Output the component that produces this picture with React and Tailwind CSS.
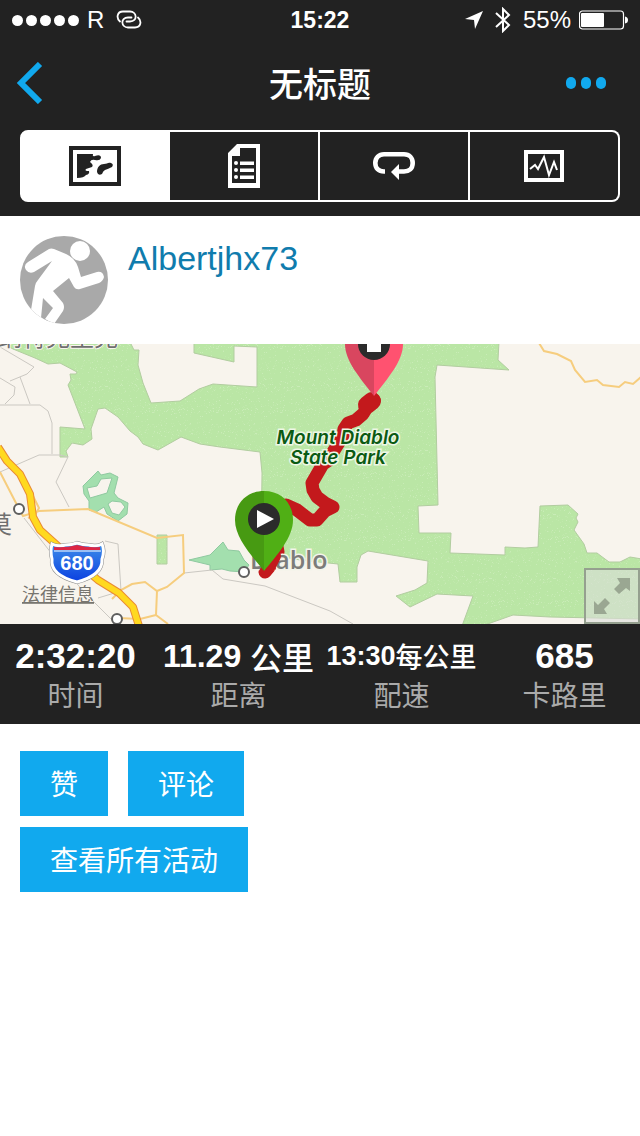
import { useState } from "react";

const latin = "font-['Liberation_Sans','Noto_Sans_CJK_SC',sans-serif]";
const cjk = "font-['Noto_Sans_CJK_SC',sans-serif]";

const stats = [
  { label: "时间", value: "2:32:20", size: "text-[35px]" },
  { label: "距离", value: "11.29 ", unit: "公里", size: "text-[32px]" },
  { label: "配速", value: "13:30", unit: "每公里", size: "text-[27px]" },
  { label: "卡路里", value: "685", size: "text-[35px]" },
];

// light flecks scattered over the park areas
const flecks = Array.from({ length: 400 }, (_, i) => ({
  x: (i * 37 + ((i * i * 7) % 23)) % 64,
  y: (i * 53 + ((i * i * 11) % 31)) % 64,
}));

const MapIcon = () => (
  <svg width="52" height="40" viewBox="0 0 52 40" aria-hidden="true">
    <rect x="2" y="2" width="48" height="36" fill="none" stroke="currentColor" strokeWidth="4" />
    <path fill="currentColor" d="M8 8H24Q23 11 26 10Q32 8 32 12Q31 15 26 14Q22 13 21 16Q25 19 23 21Q20 22 17 23Q15 25 20 25Q21 28 17 29Q15 32 8 32Z" />
    <path fill="currentColor" d="M28 26C28 21 31 18 35 18C38 18 39 16 42 17Q45 18 43 21Q39 23 36 24Q34 25 33 28Q29 30 28 26Z" />
  </svg>
);

const ListIcon = () => (
  <svg width="32" height="44" viewBox="0 0 32 44" fill="currentColor" aria-hidden="true">
    <path fillRule="evenodd" d="M9 0H32V44H0V9ZM12 4V12H4V39H28V4Z" />
    <circle cx="8" cy="19" r="2" />
    <circle cx="8" cy="26" r="2" />
    <circle cx="8" cy="33" r="2" />
    <path d="M12 17.5H26V21H12ZM12 24.5H26V28H12ZM12 31.5H26V35H12Z" />
  </svg>
);

const LapIcon = () => (
  <svg width="42" height="28" viewBox="0 0 42 28" aria-hidden="true">
    <path fill="none" stroke="currentColor" strokeWidth="4.6" d="M12 19.500H11C5.500 19.500 2.300 16 2.300 11C2.300 5.500 6 2.300 11 2.300H31C36.500 2.300 39.700 6 39.700 11C39.700 16.500 36 19.500 31 19.500H25" />
    <path fill="currentColor" d="M26 12V28L18 20Z" />
  </svg>
);

const ChartIcon = () => (
  <svg width="40" height="32" viewBox="0 0 40 32" fill="none" stroke="currentColor" aria-hidden="true">
    <rect x="2" y="2" width="36" height="28" strokeWidth="4" />
    <path strokeWidth="2" d="M6 19L11 15L14 19L20 7L25 25L30 12L33 20" />
  </svg>
);

const tabs = [
  { id: "map", label: "地图", Icon: MapIcon },
  { id: "details", label: "详情", Icon: ListIcon },
  { id: "laps", label: "计圈", Icon: LapIcon },
  { id: "charts", label: "图表", Icon: ChartIcon },
];

const StatusBar = () => (
  <div className="grid h-10 grid-cols-3 items-center px-3 text-2xl text-white">
    <div className="flex items-center">
      <div className="flex gap-[3px]">
        {[0, 1, 2, 3, 4].map((n) => (
          <span key={n} className="size-[11px] rounded-full bg-white" />
        ))}
      </div>
      <span className="ml-2">R</span>
      <svg className="ml-3" width="26" height="20" viewBox="0 0 26 20" fill="none" stroke="#fff" strokeWidth="1.8" strokeLinecap="round" aria-hidden="true">
        <path d="M4 11.500C0 8 1 1.500 7 1.500H14C21 1.500 22 11.500 14 11.500H10.500" />
        <path d="M22 7.500C26 11 25 17.500 19 17.500H12C5 17.500 4 7.500 12 7.500H15.500" />
      </svg>
    </div>
    <span className="text-center text-[23px] font-bold">15:22</span>
    <div className="flex items-center justify-end">
      <svg width="18" height="18" viewBox="0 0 18 18" aria-hidden="true">
        <path fill="#fff" d="M18 0L10 18L9 9L0 8Z" />
      </svg>
      <svg className="ml-3" width="16" height="26" viewBox="0 0 16 26" fill="none" stroke="#fff" strokeWidth="2" aria-hidden="true">
        <path d="M1 6L14 18L8 24V2L14 8L1 20" />
      </svg>
      <span className="ml-3">55%</span>
      <svg className="ml-2" width="49" height="20" viewBox="0 0 49 20" aria-hidden="true">
        <rect x="0.500" y="1" width="44" height="18" rx="3" fill="none" stroke="#fff" strokeWidth="1.200" />
        <rect x="2" y="3" width="23" height="14" rx="1" fill="#fff" />
        <path fill="#fff" d="M46 6.500Q49 7 49 10T46 13.500Z" />
      </svg>
    </div>
  </div>
);

const Avatar = () => (
  <svg className="size-[88px] shrink-0 rounded-full bg-[#a9a9a9]" viewBox="0 0 88 88" aria-hidden="true">
    <circle cx="60" cy="15" r="10" fill="#fff" />
    <path fill="#fff" d="M29 13Q31 12 34 13L46 18Q55 22 58 31L61 41L77 36Q83 35 84 41Q83 45 79 47L60 53Q56 54 54 51L49 42L33 55L43 67Q45 71 43 75L34 88L25 83L33 72L23 62L21 82L11 74L15 50Q16 46 18 44L32 25L14 36Q9 38 6 34Q3 29 8 26Z" />
  </svg>
);

const ActivityMap = () => (
  <div className="relative h-[280px] overflow-hidden bg-[#f8f4ed]">
    <svg className="block h-full w-full" viewBox="0 0 640 280" preserveAspectRatio="xMidYMid slice">
      <defs>
        <pattern id="park" width="64" height="64" patternUnits="userSpaceOnUse">
          <rect width="64" height="64" fill="#bae6a5" />
          {flecks.map((f, i) => (
            <rect key={i} x={f.x} y={f.y} width="1" height="1" fill={i % 3 ? "#c0e8ac" : "#c9ecb7"} />
          ))}
        </pattern>
        <linearGradient id="shield" x1="0" y1="0" x2="0" y2="1">
          <stop offset="0" stopColor="#3f8fea" />
          <stop offset="1" stopColor="#0a3fe0" />
        </linearGradient>
      </defs>

      {/* parks */}
      <g fill="url(#park)" stroke="#b2cda0" strokeWidth="1">
        <path
          fillRule="evenodd"
          d="M0-2L13 5L35 14L48 20L60 19L77 28L76 30L70 30L71 36L68 41L85 85L60 83V113H68L66 107L72 99L83 101L92 95L91 85L98 65L105 64L118 73L130 87L138 93L143 100L158 106L181 93L200 100L220 103L260 108L262 129L261 209L300 216L338 220L340 238H357V223L361 211L368 207L428 217L427 239L415 246L396 252L410 263L437 250L473 252L462 282H482L513 271L550 273L642 275V215L630 213L620 218L609 218L597 209H587L584 200L574 186L578 178L576 174L578 170L568 161L540 162L538 203L525 204L505 203V211L450 209L451 189H419L418 162L438 161L435 33L437 21L509 26L498 16L499-2H194V9L234 18V2L257 3V43L213 40L199 45L180 57L151 59L143 39L138 21L139 6H134L130-2Z"
        />
        <path d="M157 191H167V220H157Z" />
      </g>
      <g fill="#a3dfae" stroke="#8fc9a0" strokeWidth="1">
        <path fillRule="evenodd" d="M83 142L98 127L101 131L110 129L118 133L114 149L118 154L128 159L127 170L118 177L107 170L104 163L96 168L89 166V157L84 150ZM87 144L90 154L107 149L112 134L101 135L97 142ZM108 160L112 169L119 171L125 163L121 158L112 157Z" />
        <path d="M189 216L210 211L223 198L228 206L239 207L244 216L249 221L244 228L230 227L222 225L210 226V221Z" />
      </g>

      {/* minor roads */}
      <g fill="none" stroke="#cbc8c2" strokeWidth="1">
        <path d="M0 3L34 23L27 30L10 37M0 34L15 43L14 51L5 60M20 33L30 60M0 61H40L48 67L52 79V110" />
        <path d="M0 128L39 111H60L68 113L56 138L69 163M24 174L55 214L84 248L112 276M105 197L118 200L121 247L98 254" />
        <path d="M184 229L212 226L223 235L265 242L330 267L353 280" />
      </g>

      {/* secondary roads */}
      <g fill="none" stroke="#f6cd7e" strokeWidth="2">
        <path d="M0 128L17 161L23 172L39 167L88 165L157 194L183 191L184 229L167 243L157 247L145 238L132 240L121 246L112 255M157 247L156 271L168 280M156 271L140 275L118 274M33 152L39 164L35 171L28 174" />
        <path d="M539-1L544 7L557 10L571 17L575 26L585 38L597 36L603 41L619 43L625 38L633 40L641 33" />
      </g>

      {/* interstate */}
      <g fill="none" strokeLinejoin="round">
        <path stroke="#e98b35" strokeWidth="8" d="M-2 103L7 117L20 130L30 150L33 173L40 186L60 204L98 236L119 249L133 263L139 282" />
        <path stroke="#ffd91f" strokeWidth="6" d="M-2 103L7 117L20 130L30 150L33 173L40 186L60 204L98 236L119 249L133 263L139 282" />
      </g>
      <path d="M52 200Q58 203 65 201Q72 201 77 199Q83 201 89 201Q97 203 102 200Q105 207 102 215Q103 231 77 238Q50 231 52 215Q50 207 52 200Z" fill="none" stroke="#8b8b8b" strokeWidth="4" />
      <path d="M52 200Q58 203 65 201Q72 201 77 199Q83 201 89 201Q97 203 102 200Q105 207 102 215Q103 231 77 238Q50 231 52 215Q50 207 52 200Z" fill="url(#shield)" stroke="#fff" strokeWidth="3" />
      <path d="M54 203Q66 204 77 201Q88 204 100 203V206H54Z" fill="#dc2645" />
      <path d="M54 207H101" stroke="#fff" strokeWidth="1" />
      <text x="77" y="226" textAnchor="middle" fill="#fff" className="font-['Liberation_Sans',sans-serif] text-[20px] font-bold">680</text>

      {/* town dots */}
      <g fill="#fff" stroke="#5e5e5e" strokeWidth="2">
        <circle cx="19" cy="165" r="5" />
        <circle cx="117" cy="275" r="5" />
      </g>

      {/* place names */}
      <g fill="#6f6f6f" stroke="#f8f4ed" strokeWidth="2" paintOrder="stroke" className="font-['Noto_Sans_CJK_SC',sans-serif] text-2xl">
        <text x="118" y="2" textAnchor="end">沃尔纳特克里克</text>
        <text x="12" y="189" textAnchor="end">阿拉莫</text>
      </g>
      <a href="#legal">
        <text x="22" y="257" fill="#77756f" className="font-['Noto_Sans_CJK_SC',sans-serif] text-lg underline">法律信息</text>
      </a>

      {/* recorded track */}
      <g fill="none" stroke="#c3191c" strokeLinecap="round" strokeLinejoin="round">
        <path strokeWidth="13" d="M374 56L369 60L363 70L356 76L348 79L344 85L343 92L338 100L333 108L329 116L323 120L312 139L313 146L317 153L325 159L333 163L325 167L317 176L310 176L297 166L286 161L270 165L278 208L270 222L265 228" />
        <path strokeWidth="18" d="M372 57L367 61" />
      </g>

      <g className="font-['Inter',sans-serif] text-[19px] font-semibold italic" fill="#0b5a13" stroke="#eef7e6" strokeWidth="3" paintOrder="stroke" textAnchor="middle">
        <text x="338" y="100">Mount Diablo</text>
        <text x="338" y="120">State Park</text>
      </g>
      <text x="250" y="225" fill="#7c7c7a" stroke="#f3f4ea" strokeWidth="3" paintOrder="stroke" className="font-['Open_Sans',sans-serif] text-[25px] font-semibold">Diablo</text>
      <path fill="none" stroke="#c3191c" strokeWidth="12" strokeLinecap="round" d="M275 212L270 222L265 228" />
      <circle cx="244" cy="228" r="5" fill="#fff" stroke="#5e5e5e" strokeWidth="2" />

      {/* start pin */}
      <path fill="#479a12" d="M264 147C246 147 235 160 235 176C235 193 250 210 264 227Z" />
      <path fill="#50af15" d="M264 147C282 147 293 160 293 176C293 193 278 210 264 227Z" />
      <circle cx="264" cy="175" r="16" fill="#2b2b2b" />
      <path fill="#fff" d="M257 166L274 175L257 184Z" />

      {/* finish pin */}
      <path fill="#d9465f" d="M374-29C356-29 345-16 345 0C345 17 360 34 374 52Z" />
      <path fill="#ff5270" d="M374-29C392-29 403-16 403 0C403 17 388 34 374 52Z" />
      <circle cx="374" cy="0" r="16" fill="#2b2b2b" />
      <rect x="367" y="-7" width="14" height="15" fill="#fff" />
    </svg>

    <button aria-label="全屏" className="absolute right-0 bottom-0 flex size-14 items-center justify-center border-2 border-[#95a08f] bg-[#dcdedb]/60">
      <svg width="36" height="36" viewBox="0 0 36 36" fill="#9aa792" aria-hidden="true">
        <path d="M36 0V13L32 10L25 16L20 11L26 5L23 0Z" />
        <path d="M0 36V23L4 27L11 20L16 25L10 31L13 36Z" />
      </svg>
    </button>
  </div>
);

const ActionButton = ({ children }) => (
  <button className={`${cjk} bg-[#11a9ee] px-[30px] py-4 text-[28px] leading-[33px] font-normal text-white`}>
    {children}
  </button>
);

const App = () => {
  const [activeTab, setActiveTab] = useState("map");

  return (
    <div className={`${latin} min-h-screen bg-white`}>
      <header className="bg-[#222] pb-[14px]">
        <StatusBar />

        <div className="grid h-[90px] grid-cols-3 items-center px-4 pb-1">
          <button aria-label="返回" className="justify-self-start">
            <svg width="27" height="42" viewBox="0 0 27 42" fill="none" stroke="#11a9ee" strokeWidth="6" aria-hidden="true">
              <path d="M24 2L5 21L24 40" />
            </svg>
          </button>
          <h1 className={`${cjk} text-center text-[34px] leading-10 font-medium text-white`}>无标题</h1>
          <button aria-label="更多" className="mr-[18px] flex gap-[5px] justify-self-end">
            <span className="h-3 w-[10px] rounded-full bg-[#11a9ee]" />
            <span className="h-3 w-[10px] rounded-full bg-[#11a9ee]" />
            <span className="h-3 w-[10px] rounded-full bg-[#11a9ee]" />
          </button>
        </div>

        <div className="mx-5 grid h-[72px] grid-cols-4">
          {tabs.map(({ id, label, Icon }) => (
            <button
              key={id}
              aria-label={label}
              aria-pressed={activeTab === id}
              onClick={() => setActiveTab(id)}
              className={`flex items-center justify-center border-y-2 border-r-2 border-white first:rounded-l-lg first:border-l-2 last:rounded-r-lg ${
                activeTab === id ? "bg-white text-[#222]" : "text-white"
              }`}
            >
              <Icon />
            </button>
          ))}
        </div>
      </header>

      <main>
        <section className="flex items-start gap-5 p-5">
          <Avatar />
          <a href="#profile" className="text-[34px] leading-[44px] text-[#107cad]">Albertjhx73</a>
        </section>

        <ActivityMap />

        <section className="grid h-[100px] grid-cols-4 gap-3 bg-[#222] pt-2 text-center whitespace-nowrap">
          {stats.map((s) => (
            <div key={s.label} className="flex flex-col items-center">
              <div className={`${s.size} flex h-12 items-center font-bold whitespace-pre text-white`}>
                {s.value}
                {s.unit && <span className={`${cjk} font-medium`}>{s.unit}</span>}
              </div>
              <div className={`${cjk} text-[28px] leading-7 font-normal text-[#aaa]`}>{s.label}</div>
            </div>
          ))}
        </section>

        <section className="flex flex-col items-start gap-[11px] px-5 pt-[27px]">
          <div className="flex gap-5">
            <ActionButton>赞</ActionButton>
            <ActionButton>评论</ActionButton>
          </div>
          <ActionButton>查看所有活动</ActionButton>
        </section>
      </main>
    </div>
  );
};

export default App;
